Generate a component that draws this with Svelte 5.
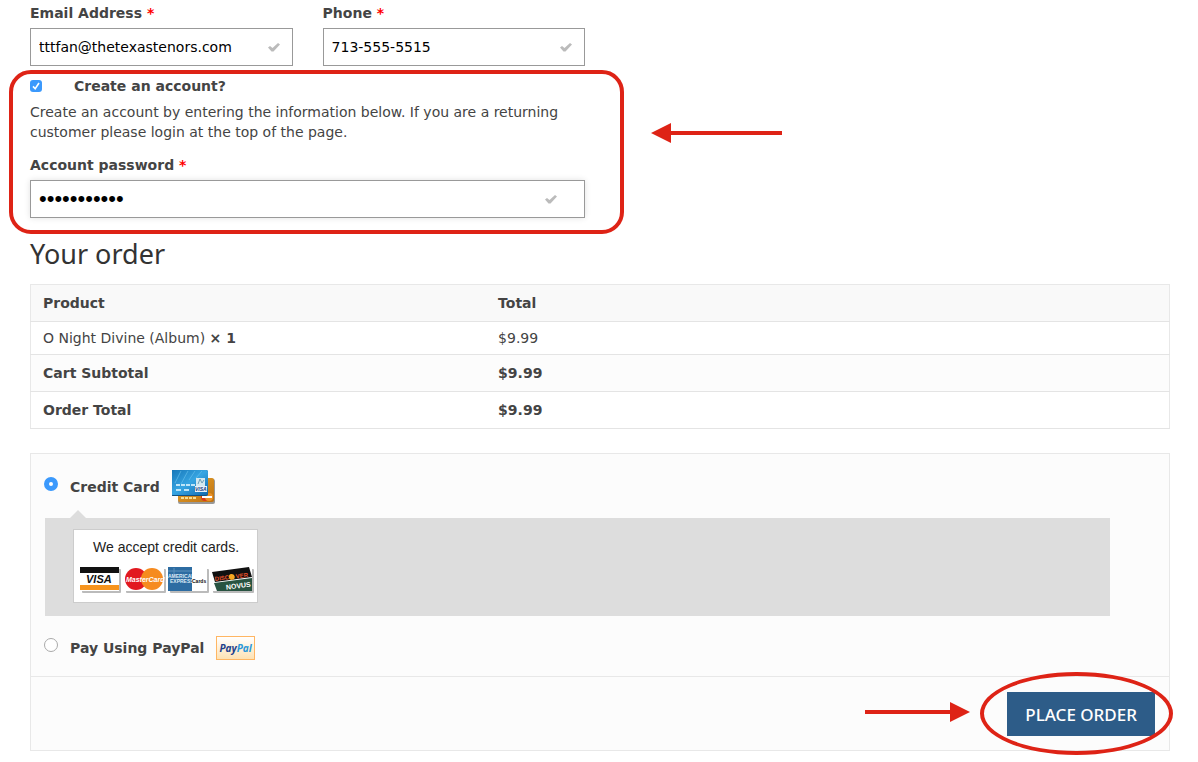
<script>
  let email = 'tttfan@thetexastenors.com'
  let phone = '713-555-5515'
  let password = 'texastenors'
  let create_account = true
  let payment_method = 'card'

  let items = [{ name: 'O Night Divine (Album)', quantity: 1, total: '$9.99' }]
  let totals = [
    { label: 'Cart Subtotal', amount: '$9.99' },
    { label: 'Order Total', amount: '$9.99' },
  ]
</script>

<style>
  :global(body) {
    margin: 0;
    background: #fff;
  }
  .checkout {
    padding: 3px 28px 11px 30px;
    font: 14px/20px 'DejaVu Sans', Verdana, sans-serif;
    color: #444;
  }
  .billing {
    inline-size: 48.7%;
  }
  .row {
    display: grid;
    grid-template-columns: 1fr 1fr;
    gap: 30px;
  }
  label {
    font-weight: bold;
  }
  .field label {
    display: block;
    margin-block-end: 5px;
  }
  .required {
    color: red;
  }
  .control {
    display: flex;
    align-items: center;
    block-size: 36px;
    padding-inline-end: 11px;
    border: 1px solid #999;
    background: #fff;
  }
  .control.active {
    padding-inline-end: 26px;
    box-shadow: 0 0 6px rgba(0, 0, 0, 0.12);
  }
  .control input {
    flex: 1;
    min-inline-size: 0;
    padding: 0 8px;
    border: 0;
    outline: 0;
    background: none;
    font: inherit;
    color: #000;
  }
  .control input[type='password'] {
    font: 22px/20px 'Liberation Sans', Arial, sans-serif;
  }
  .tick {
    inline-size: 14px;
    block-size: 12px;
    fill: #bbb;
  }
  .account {
    position: relative;
    padding-block: 10px 16px;
  }
  .account p {
    margin: 6px 0 13px;
  }
  .create {
    display: flex;
    align-items: center;
    gap: 32px;
  }
  input[type='checkbox'],
  input[type='radio'] {
    appearance: none;
    flex: none;
    margin: 0;
  }
  input[type='checkbox'] {
    inline-size: 12px;
    block-size: 12px;
    border: 1px solid #aaa;
    border-radius: 3px;
  }
  input[type='checkbox']:checked {
    border: 0;
    background: #3b99fc
      url("data:image/svg+xml,%3Csvg xmlns='http://www.w3.org/2000/svg' viewBox='0 0 12 12'%3E%3Cpath d='M3 6.4 5.2 8.8 9 3' fill='none' stroke='white' stroke-width='1.6'/%3E%3C/svg%3E");
  }
  input[type='radio'] {
    box-sizing: border-box;
    inline-size: 14px;
    block-size: 14px;
    margin-block-end: 6px;
    border: 1px solid #aaa;
    border-radius: 50%;
    background: #fff;
  }
  input[type='radio']:checked {
    border: 5px solid #3b99fc;
  }
  h3 {
    margin: 0 0 10px;
    font: 27px/40px 'Noto Sans', 'Open Sans', sans-serif;
    color: #333;
  }
  table {
    inline-size: 100%;
    border: 1px solid #e8e8e8;
    border-collapse: collapse;
    table-layout: fixed;
  }
  th,
  td {
    padding: 8px 12px;
    border-block-end: 1px solid #e4e4e4;
    text-align: start;
  }
  th:first-child,
  td:first-child {
    inline-size: 40%;
    box-sizing: border-box;
  }
  thead {
    background: #f9f9f9;
  }
  tbody td {
    padding-block: 6px;
  }
  tfoot td {
    font-weight: bold;
  }
  tfoot tr:first-child {
    background: #fcfcfc;
  }
  .payment {
    margin-block-start: 24px;
    border: 1px solid #e8e8e8;
    background: #fcfcfc;
  }
  .methods {
    margin: 0;
    padding: 14px 59px 15px 14px;
    list-style: none;
  }
  .method {
    display: flex;
    align-items: center;
    min-block-size: 38px;
  }
  .method label {
    margin-inline: 12px;
  }
  .method.paypal {
    min-block-size: 26px;
    margin-block-start: 19px;
  }
  .method input {
    margin-inline-start: -1px;
  }
  .cards {
    inline-size: 44px;
    block-size: 35px;
  }
  .paypal-logo {
    padding: 0 2px;
    border: 1px solid #ffb663;
    background: linear-gradient(#fff, #fde2b4);
    font: italic bold 10px/22px 'Open Sans', sans-serif;
    color: #1c3f8c;
  }
  .paypal-logo span {
    color: #2997d8;
  }
  .details {
    position: relative;
    margin-block-start: 12px;
    padding: 11px 28px 12px;
    background: #ddd;
  }
  .details::before {
    content: '';
    position: absolute;
    inset-block-end: 100%;
    inset-inline-start: 25px;
    border: 8px solid transparent;
    border-block-start: 0;
    border-block-end-color: #ddd;
  }
  .accepted {
    display: block;
    inline-size: 185px;
    block-size: 75px;
  }
  .place {
    display: flex;
    justify-content: flex-end;
    padding: 15px 14px 14px;
    border-block-start: 1px solid #e8e8e8;
  }
  .action {
    position: relative;
  }
  button {
    display: block;
    block-size: 44px;
    padding: 0 18px;
    border: 0;
    background: #2d5c88;
    font: 500 17px 'Noto Sans', 'Open Sans', sans-serif;
    color: #fff;
  }
  /* Red callouts laid over the form */
  .callout {
    position: absolute;
    box-sizing: border-box;
    border: 4px solid #de2316;
    pointer-events: none;
  }
  .callout.box {
    inset: 4px -39px 0 -21px;
    border-radius: 22px;
  }
  .callout.oval {
    inset: -20px -18px -19px -27px;
    border-radius: 50%;
  }
  .arrow {
    position: absolute;
    fill: #de2316;
  }
  .arrow.left {
    inset-block-start: 57px;
    inset-inline-start: calc(100% + 66px);
  }
  .arrow.right {
    inset-block-start: 10px;
    inset-inline-end: calc(100% + 37px);
  }
</style>

{#snippet tick()}
  <svg class="tick" viewBox="0 0 14 12" aria-hidden="true">
    <path d="M1 6.500 3 5 5.500 7 11 2 13 3.500 6.500 10.500H4.500Z" />
  </svg>
{/snippet}

<form class="checkout" on:submit|preventDefault>
  <section class="billing">
    <div class="row">
      <div class="field">
        <label for="email">Email Address <span class="required">*</span></label>
        <div class="control">
          <input type="email" id="email" bind:value={email} />
          {@render tick()}
        </div>
      </div>
      <div class="field">
        <label for="phone">Phone <span class="required">*</span></label>
        <div class="control">
          <input type="tel" id="phone" bind:value={phone} />
          {@render tick()}
        </div>
      </div>
    </div>

    <div class="account">
      <div class="create">
        <input type="checkbox" id="create" bind:checked={create_account} />
        <label for="create">Create an account?</label>
      </div>
      {#if create_account}
        <p>
          Create an account by entering the information below. If you are a
          returning customer please login at the top of the page.
        </p>
        <div class="field">
          <label for="password">
            Account password <span class="required">*</span>
          </label>
          <div class="control active">
            <input type="password" id="password" bind:value={password} />
            {@render tick()}
          </div>
        </div>
      {/if}
      <div class="callout box"></div>
      <svg class="arrow left" width="131" height="20" aria-hidden="true">
        <path d="M0 10 20 0V8H131V12H20V20Z" />
      </svg>
    </div>
  </section>

  <h3>Your order</h3>
  <table>
    <thead>
      <tr>
        <th>Product</th>
        <th>Total</th>
      </tr>
    </thead>
    <tbody>
      {#each items as item}
        <tr>
          <td>{item.name} <strong>× {item.quantity}</strong></td>
          <td>{item.total}</td>
        </tr>
      {/each}
    </tbody>
    <tfoot>
      {#each totals as total}
        <tr>
          <th>{total.label}</th>
          <td>{total.amount}</td>
        </tr>
      {/each}
    </tfoot>
  </table>

  <section class="payment">
    <ul class="methods">
      <li>
        <div class="method">
          <input
            type="radio"
            id="card"
            name="payment"
            value="card"
            bind:group={payment_method} />
          <label for="card">Credit Card</label>
          <svg class="cards" viewBox="1 0 44 35" aria-hidden="true">
            <defs>
              <linearGradient id="blue" x2="1" y2="1">
                <stop stop-color="#1676b8" />
                <stop offset="0.5" stop-color="#37a5e2" />
                <stop offset="1" stop-color="#1268ae" />
              </linearGradient>
              <linearGradient id="gold" x2="1" y2="1">
                <stop stop-color="#e9a52c" />
                <stop offset="1" stop-color="#bd7112" />
              </linearGradient>
            </defs>
            <rect x="7" y="9" width="37" height="25" rx="2" fill="#999" />
            <rect x="7" y="8" width="36" height="24" rx="2" fill="url(#gold)" />
            <path d="M10 28h3m1 0h3m1 0h3m1 0h3" stroke="#f8dc91" stroke-width="2" />
            <circle cx="34" cy="27" r="4" fill="#d83a1c" />
            <circle cx="38" cy="27" r="4" fill="#ec9227" />
            <path d="M31 27h10" stroke="#fff" stroke-width="2" />
            <rect width="37" height="26" rx="2" fill="#125182" />
            <rect width="37" height="25" rx="2" fill="url(#blue)" />
            <path d="M4 13 10 1M10 14 17 1M18 10 24 1M25 8 31 1" stroke="#6cc6f2" opacity="0.6" />
            <path d="M5 15h4m1 0h4m1 0h4m1 0h4M5 20h5m3 0h5" stroke="#bfe5f8" stroke-width="2" />
            <rect x="25" y="8" width="9" height="8" fill="#d4e8f0" />
            <path d="M27 14 29 9 31 13 33 10" fill="none" stroke="#6c9fb7" />
            <rect x="24" y="16" width="12" height="6" fill="#e8f2fa" />
            <text x="24" y="21" font-size="5" font-weight="bold" font-style="italic" font-family="Liberation Sans, Arial, sans-serif" fill="#203c80">VISA</text>
          </svg>
        </div>
        {#if payment_method == 'card'}
          <div class="details">
            <svg class="accepted" viewBox="0 0 185 75" font-family="Liberation Sans, Arial, sans-serif">
              <rect x="0.5" y="0.5" width="184" height="73" fill="#fff" stroke="#ccc" />
              <text x="20" y="23" font-size="14" fill="#222">We accept credit cards.</text>
              <g fill="#bbb">
                <rect x="9" y="40" width="39" height="24" rx="1" />
                <rect x="53" y="40" width="40" height="24" rx="1" />
                <rect x="97" y="40" width="39" height="24" rx="1" />
                <rect x="140" y="40" width="41" height="24" rx="1" />
              </g>
              <rect x="7" y="38" width="39" height="24" fill="#fff" />
              <rect x="7" y="38" width="39" height="6" fill="#111" />
              <rect x="7" y="56" width="39" height="5" fill="#f7941d" />
              <text x="13" y="54" font-size="11" font-weight="bold" font-style="italic" fill="#111">VISA</text>

              <rect x="51" y="38" width="40" height="24" fill="#fff" />
              <circle cx="63" cy="50" r="11" fill="#e21920" />
              <circle cx="79" cy="50" r="11" fill="#f68b1f" />
              <text x="53" y="53" font-size="7" font-weight="bold" font-style="italic" fill="#fff">MasterCard</text>

              <rect x="95" y="38" width="39" height="24" fill="#fff" />
              <rect x="95" y="38" width="24" height="24" fill="#2d6ca2" />
              <path d="M95 42h24M101 39v7" stroke="#5c91bb" />
              <text x="95" y="49" font-size="5" font-weight="bold" fill="#dceaf5">AMERICAN</text>
              <text x="97" y="54" font-size="5" font-weight="bold" fill="#dceaf5">EXPRESS</text>
              <rect x="119" y="44" width="15" height="12" fill="#fff" />
              <text x="119" y="54" font-size="5" font-weight="bold" fill="#111">Cards</text>

              <rect x="138" y="38" width="41" height="24" fill="#fff" />
              <path d="M139 43 176 38 179 48 142 53Z" fill="#111" />
              <path d="M141 54 179 49V62H144Z" fill="#285341" />
              <g transform="rotate(-7 158 50)" font-weight="bold">
                <text x="142" y="50" font-size="6" fill="#e8512b">DISC</text>
                <circle cx="159" cy="48" r="3" fill="#f6a821" />
                <text x="163" y="50" font-size="6" fill="#e8512b">VER</text>
                <text x="152" y="60" font-size="7" fill="#fff">NOVUS</text>
              </g>
            </svg>
          </div>
        {/if}
      </li>
      <li class="method paypal">
        <input
          type="radio"
          id="paypal"
          name="payment"
          value="paypal"
          bind:group={payment_method} />
        <label for="paypal">Pay Using PayPal</label>
        <span class="paypal-logo">Pay<span>Pal</span></span>
      </li>
    </ul>
    <div class="place">
      <div class="action">
        <button type="submit">PLACE ORDER</button>
        <div class="callout oval"></div>
        <svg class="arrow right" width="105" height="20" aria-hidden="true">
          <path d="M105 10 85 0V8H0V12H85V20Z" />
        </svg>
      </div>
    </div>
  </section>
</form>
